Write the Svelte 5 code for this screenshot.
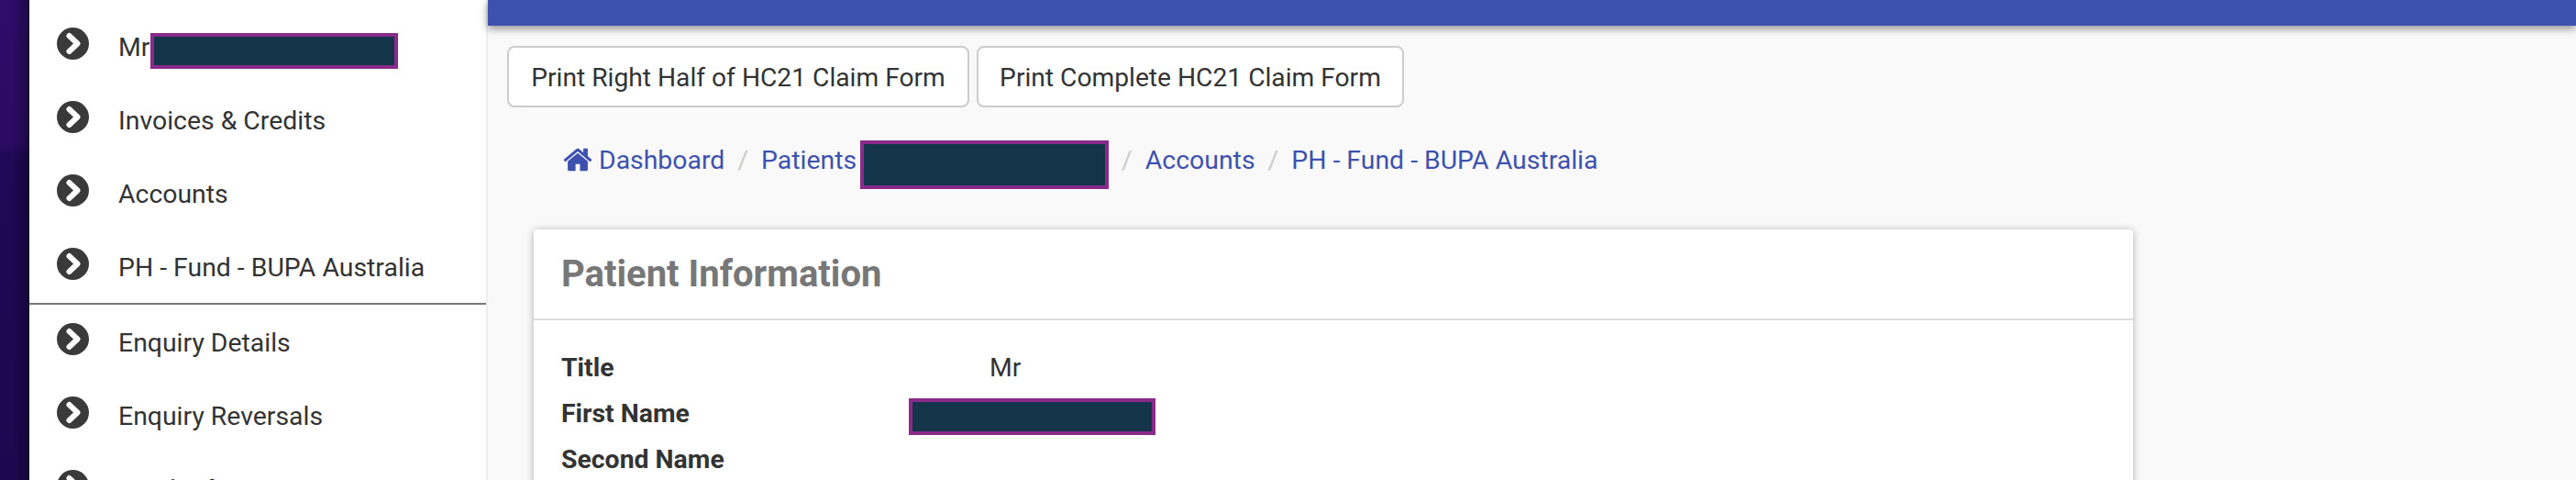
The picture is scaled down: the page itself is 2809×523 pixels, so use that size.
<script>
    const menuTop = [
        { label: "Mr", redacted: true },
        { label: "Invoices & Credits" },
        { label: "Accounts" },
        { label: "PH - Fund - BUPA Australia" },
    ];
    const menuBottom = ["Enquiry Details", "Enquiry Reversals", "Funder fees"];
</script>

{#snippet chevron()}
    <svg class="chev" viewBox="0 0 35 35" aria-hidden="true">
        <circle cx="17.5" cy="17.5" r="17.5" fill="#3a3a3a" />
        <polyline points="13.5,9 22.5,17.5 13.5,26" fill="none" stroke="#fff" stroke-width="6" stroke-linejoin="round" stroke-linecap="round" />
    </svg>
{/snippet}

<div class="page">
    <div class="strip"></div>

    <nav class="sidebar">
        <ul class="top">
            {#each menuTop as item}
                <li>
                    {@render chevron()}
                    <span class="label">{item.label}{#if item.redacted}<span class="redact name"></span>{/if}</span>
                </li>
            {/each}
        </ul>
        <ul>
            {#each menuBottom as item}
                <li>
                    {@render chevron()}
                    <span class="label">{item}</span>
                </li>
            {/each}
        </ul>
    </nav>

    <main>
        <div class="topbar"></div>

        <div class="actions">
            <button>Print Right Half of HC21 Claim Form</button>
            <button>Print Complete HC21 Claim Form</button>
        </div>

        <div class="crumbs">
            <svg class="home" viewBox="0 0 1792 1792" aria-hidden="true">
                <path fill="currentColor" d="M1472 992v480q0 26-19 45t-45 19h-384v-384h-256v384h-384q-26 0-45-19t-19-45v-480q0-1 .5-3t.5-3l575-474 575 474q1 2 1 6zm223-69l-62 74q-8 9-21 11h-3q-13 0-21-7l-692-577-692 577q-12 8-24 7-13-2-21-11l-62-74q-8-10-7-23.500t11-21.500l719-599q32-26 76-26t76 26l244 204v-195q0-14 9-23t23-9h192q14 0 23 9t9 23v408l219 182q10 8 11 21.500t-7 23.500z" />
            </svg>
            <a href={"#"}>Dashboard</a>
            <span class="sep">/</span>
            <a href={"#"}>Patients</a>
            <span class="redact crumb"></span>
            <span class="sep">/</span>
            <a href={"#"}>Accounts</a>
            <span class="sep">/</span>
            <a href={"#"}>PH - Fund - BUPA Australia</a>
        </div>

        <section class="card">
            <h2>Patient Information</h2>
            <div class="body">
                <div class="row"><strong>Title</strong><span>Mr</span></div>
                <div class="row"><strong>First Name</strong><span class="redact first"></span></div>
                <div class="row"><strong>Second Name</strong><span></span></div>
            </div>
        </section>
    </main>
</div>

<style>
    :global(body) {
        margin: 0;
        overflow: hidden;
        background: #f9f9f9;
    }

    .page {
        display: flex;
        height: 523px;
        overflow: hidden;
        font-family: Roboto, "Liberation Sans", sans-serif;
        font-size: 28.4px;
        color: #333;
    }

    .strip {
        flex: 0 0 32px;
        background:
            linear-gradient(to right, transparent 0, transparent 30px, #0a0420 31px),
            linear-gradient(to right, rgba(0, 0, 0, 0) 40%, rgba(0, 0, 0, 0.3) 100%),
            linear-gradient(to bottom, #2e0c68 0, #2c0b64 155px, #1f0855 170px, #1d0850 100%);
    }

    .sidebar {
        flex: 0 0 498px;
        background: #fff;
        padding-top: 10px;
        box-sizing: border-box;
    }

    ul {
        list-style: none;
        margin: 0;
        padding: 0;
    }

    .top {
        border-bottom: 2px solid #777;
    }

    li {
        display: flex;
        gap: 32px;
        height: 80px;
        padding: 20px 0 0 30px;
        box-sizing: border-box;
    }

    .chev {
        flex: 0 0 35px;
        height: 35px;
    }

    .label {
        line-height: 43px;
        white-space: nowrap;
    }

    .redact {
        display: inline-block;
        box-sizing: border-box;
        background: #143449;
        border: 4px solid #8a2a8a;
    }

    .name {
        width: 270px;
        height: 39px;
        margin: 6px 0 0 1px;
        vertical-align: top;
    }

    main {
        flex: 1;
        min-width: 0;
        border-left: 2px solid #eee;
        background: #f9f9f9;
    }

    .topbar {
        height: 28px;
        background: #3d51ae;
        box-shadow: 0 3px 10px rgba(0, 0, 0, 0.45);
    }

    .actions {
        display: flex;
        gap: 8px;
        padding: 22px 0 0 21px;
    }

    button {
        width: 504px;
        height: 67px;
        padding: 2px 0 0;
        background: #fff;
        border: 2px solid #ccc;
        border-radius: 8px;
        font: inherit;
        font-size: 28.2px;
        color: #333;
    }

    button:last-child {
        width: 466px;
    }

    .crumbs {
        display: flex;
        align-items: flex-start;
        height: 53px;
        margin-top: 36px;
        padding-left: 81px;
        line-height: 44px;
        color: #3d51ae;
    }

    .home {
        width: 34px;
        height: 34px;
        margin: 4px 6px 0 0;
    }

    .crumbs a {
        color: inherit;
        text-decoration: none;
    }

    .sep {
        color: #ccc;
        margin: 0 14px;
    }

    .crumb {
        width: 271px;
        height: 53px;
        margin-left: 4px;
    }

    .card {
        width: 1744px;
        height: 400px;
        margin: 44px 0 0 50px;
        background: #fff;
        border-radius: 4px;
        box-shadow: 0 1px 8px rgba(0, 0, 0, 0.3);
    }

    h2 {
        margin: 0;
        height: 97px;
        padding-left: 30px;
        border-bottom: 2px solid #ddd;
        font-size: 40px;
        font-weight: 700;
        line-height: 98px;
        color: #777;
    }

    .body {
        padding: 27px 0 0 30px;
    }

    .row {
        display: grid;
        grid-template-columns: 467px 1fr;
        height: 50px;
        line-height: 50px;
    }

    .row strong {
        font-weight: 700;
    }

    .first {
        width: 269px;
        height: 40px;
        margin: 8px 0 0 -88px;
    }
</style>
